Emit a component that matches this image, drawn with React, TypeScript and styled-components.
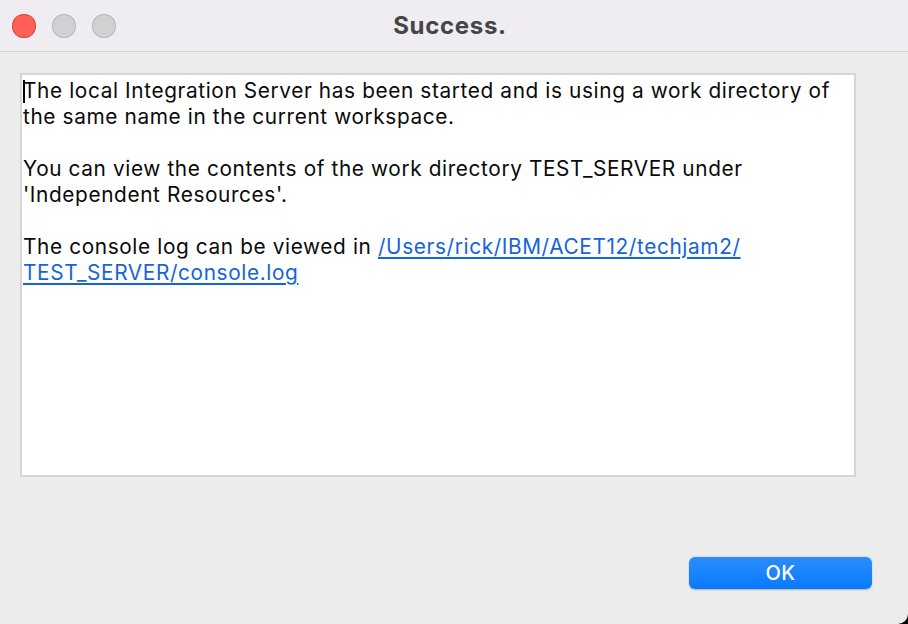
import React from "react";
import styled, { createGlobalStyle } from "styled-components";

const GlobalStyle = createGlobalStyle`
  html, body {
    margin: 0;
    padding: 0;
    background: #000;
  }
  body {
    font-family: Inter, "Noto Sans", "Liberation Sans", sans-serif;
  }
`;

const Window = styled.div`
  width: 908px;
  height: 624px;
  background: #ececec;
  border-bottom-right-radius: 10px;
  display: flex;
  flex-direction: column;
  overflow: hidden;
`;

const TitleBar = styled.div`
  height: 52px;
  flex-shrink: 0;
  background: #efedf2;
  border-bottom: 1px solid #d3d2d6;
  box-sizing: border-box;
  display: flex;
  align-items: center;
  position: relative;
  padding-left: 12px;
`;

const Lights = styled.div`
  display: flex;
  gap: 16px;
`;

const Light = styled.span<{ color: string; edge: string }>`
  width: 24px;
  height: 24px;
  border-radius: 50%;
  background: ${(p) => p.color};
  box-shadow: inset 0 0 0 1px ${(p) => p.edge};
`;

const Title = styled.div`
  position: absolute;
  left: 0;
  right: 0;
  top: 0;
  bottom: 0;
  display: flex;
  align-items: center;
  justify-content: center;
  font-size: 24px;
  font-weight: 700;
  letter-spacing: 0.7px;
  color: #454545;
  padding-right: 8px;
  pointer-events: none;
`;

const Body = styled.div`
  flex: 1;
  display: flex;
  flex-direction: column;
  padding: 21px 52px 0 20px;
`;

const MessageBox = styled.div`
  width: 836px;
  height: 404px;
  box-sizing: border-box;
  background: #fff;
  border: 2px solid #d6d6d6;
  padding: 3px 0 0 1px;
  font-size: 20.8px;
  letter-spacing: 0.62px;
  line-height: 26px;
  color: #0a0a0a;
  position: relative;
  white-space: nowrap;
`;

const Caret = styled.span`
  position: absolute;
  left: 1px;
  top: 5px;
  width: 2px;
  height: 23px;
  background: #000;
`;

const Para = styled.p`
  margin: 0 0 26px 0;
`;

const Link = styled.a`
  color: #1664d9;
  text-decoration: underline;
  text-underline-offset: 3px;
`;

const Footer = styled.div`
  flex: 1;
  display: flex;
  justify-content: flex-end;
  align-items: flex-start;
  padding-top: 80px;
  margin-right: -16px;
`;

const OkButton = styled.button`
  width: 183px;
  height: 32px;
  border: none;
  border-radius: 6px;
  background: linear-gradient(#2a8dff, #0a7aff);
  color: #fff;
  font-family: Inter, "Noto Sans", sans-serif;
  font-size: 20px;
  font-weight: 500;
  letter-spacing: 0.5px;
  padding: 0;
  box-shadow: 0 0.5px 1.5px rgba(0, 0, 0, 0.25);
`;

export default function App() {
  return (
    <>
      <GlobalStyle />
      <Window>
        <TitleBar>
          <Lights>
            <Light color="#ff5f57" edge="#e2463f" />
            <Light color="#d1d0d2" edge="#b9b8ba" />
            <Light color="#d1d0d2" edge="#b9b8ba" />
          </Lights>
          <Title>Success.</Title>
        </TitleBar>
        <Body>
          <MessageBox>
            <Caret />
            <Para>
              The local Integration Server has been started and is using a work directory of
              <br />
              the same name in the current workspace.
            </Para>
            <Para>
              You can view the contents of the work directory TEST_SERVER under
              <br />
              'Independent Resources'.
            </Para>
            <Para>
              The console log can be viewed in{" "}
              <Link href="#">
                /Users/rick/IBM/ACET12/techjam2/
                <br />
                TEST_SERVER/console.log
              </Link>
            </Para>
          </MessageBox>
          <Footer>
            <OkButton>OK</OkButton>
          </Footer>
        </Body>
      </Window>
    </>
  );
}
